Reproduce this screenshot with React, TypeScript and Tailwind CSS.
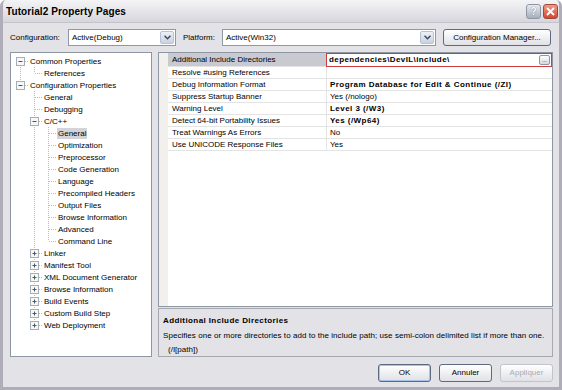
import React from 'react';

type TreeRow = {
  label: string;
  depth: number;
  toggle?: '+' | '-';
  first?: boolean;
  last?: boolean;
  guides: boolean[];
  selected?: boolean;
};

const treeRows: TreeRow[] = [
  { label: 'Common Properties', depth: 0, toggle: '-', first: true, guides: [] },
  { label: 'References', depth: 1, last: true, guides: [true] },
  { label: 'Configuration Properties', depth: 0, toggle: '-', last: true, guides: [] },
  { label: 'General', depth: 1, guides: [false] },
  { label: 'Debugging', depth: 1, guides: [false] },
  { label: 'C/C++', depth: 1, toggle: '-', guides: [false] },
  { label: 'General', depth: 2, guides: [false, true], selected: true },
  { label: 'Optimization', depth: 2, guides: [false, true] },
  { label: 'Preprocessor', depth: 2, guides: [false, true] },
  { label: 'Code Generation', depth: 2, guides: [false, true] },
  { label: 'Language', depth: 2, guides: [false, true] },
  { label: 'Precompiled Headers', depth: 2, guides: [false, true] },
  { label: 'Output Files', depth: 2, guides: [false, true] },
  { label: 'Browse Information', depth: 2, guides: [false, true] },
  { label: 'Advanced', depth: 2, guides: [false, true] },
  { label: 'Command Line', depth: 2, last: true, guides: [false, true] },
  { label: 'Linker', depth: 1, toggle: '+', guides: [false] },
  { label: 'Manifest Tool', depth: 1, toggle: '+', guides: [false] },
  { label: 'XML Document Generator', depth: 1, toggle: '+', guides: [false] },
  { label: 'Browse Information', depth: 1, toggle: '+', guides: [false] },
  { label: 'Build Events', depth: 1, toggle: '+', guides: [false] },
  { label: 'Custom Build Step', depth: 1, toggle: '+', guides: [false] },
  { label: 'Web Deployment', depth: 1, toggle: '+', last: true, guides: [false] },
];

const props: { name: string; value: string; bold?: boolean }[] = [
  { name: 'Additional Include Directories', value: 'dependencies\\DevIL\\include\\', bold: true },
  { name: 'Resolve #using References', value: '' },
  { name: 'Debug Information Format', value: 'Program Database for Edit & Continue (/ZI)', bold: true },
  { name: 'Suppress Startup Banner', value: 'Yes (/nologo)' },
  { name: 'Warning Level', value: 'Level 3 (/W3)', bold: true },
  { name: 'Detect 64-bit Portability Issues', value: 'Yes (/Wp64)', bold: true },
  { name: 'Treat Warnings As Errors', value: 'No' },
  { name: 'Use UNICODE Response Files', value: 'Yes' },
];

const dot = '#bcbcbc';

// guide line for an ancestor level
function Guide({ on }: { on: boolean }) {
  return (
    <svg width="14" height="12" className="shrink-0">
      {on && <line x1="6.5" y1="0" x2="6.5" y2="12" stroke={dot} strokeDasharray="1 1" />}
    </svg>
  );
}

function Node({ row }: { row: TreeRow }) {
  return (
    <svg width="14" height="12" className="shrink-0">
      {!row.first && <line x1="6.5" y1="0" x2="6.5" y2="6" stroke={dot} strokeDasharray="1 1" />}
      {!row.last && <line x1="6.5" y1="6" x2="6.5" y2="12" stroke={dot} strokeDasharray="1 1" />}
      <line x1="7" y1="6.5" x2="14" y2="6.5" stroke={dot} strokeDasharray="1 1" />
      {row.toggle && (
        <>
          <rect x="2.5" y="2.5" width="8" height="8" fill="#f7f7f5" stroke="#a4aebb" />
          <line x1="4.5" y1="6.5" x2="8.5" y2="6.5" stroke="#4a5566" />
          {row.toggle === '+' && <line x1="6.5" y1="4.5" x2="6.5" y2="8.5" stroke="#4a5566" />}
        </>
      )}
    </svg>
  );
}

function Select({ value, className }: { value: string; className: string }) {
  return (
    <div className={`flex h-[17px] items-center border border-[#8f98a8] bg-white ${className}`}>
      <span className="flex-1 pl-[3px] leading-none">{value}</span>
      <div className="m-[1px] flex h-[13px] w-[14px] items-center justify-center rounded-[2px] border border-[#b7c2d4] bg-gradient-to-b from-[#eef1f6] to-[#c9d2e0]">
        <svg width="7" height="5" viewBox="0 0 7 5">
          <path d="M0.5 0.8 L3.5 3.8 L6.5 0.8" fill="none" stroke="#3c4a60" strokeWidth="1.5" />
        </svg>
      </div>
    </div>
  );
}

function Button({ label, className = '', disabled = false, primary = false }: { label: string; className?: string; disabled?: boolean; primary?: boolean }) {
  return (
    <div
      className={`flex items-center justify-center rounded-[3px] border ${
        disabled ? 'border-[#c2c4cb] text-[#a8abb2]' : 'border-[#5d6a82] text-black'
      } ${primary ? 'shadow-[inset_0_0_0_1px_#a9c2e8]' : ''} bg-gradient-to-b from-[#ffffff] to-[#e0e1e6] ${className}`}
    >
      {label}
    </div>
  );
}

export default function App() {
  return (
    <div className="flex h-[390px] w-[562px] flex-col overflow-hidden rounded-t-[6px] border-x-[3px] border-b-[3px] border-[#aeadb8] bg-[#e3e2e7] font-['Liberation_Sans',sans-serif] text-[8px] text-black">
      {/* title bar */}
      <div className="flex h-[23px] shrink-0 items-center justify-between border-b border-[#c3c3cb] bg-gradient-to-b from-[#f4f4f6] via-[#e6e6ea] to-[#d5d5dc] pl-[3px] pr-[1px]">
        <span className="text-[10px] font-bold tracking-[0.1px]">Tutorial2 Property Pages</span>
        <div className="flex gap-[2px]">
          <div className="flex h-[15px] w-[15px] items-center justify-center rounded-[3px] border border-[#8e95a3] bg-gradient-to-b from-[#e8ebf1] to-[#a7afbd] text-[10px] font-bold text-white [text-shadow:0_0_1px_#4d5566]">
            ?
          </div>
          <div className="flex h-[15px] w-[15px] items-center justify-center rounded-[3px] border border-[#9c4a3c] bg-gradient-to-b from-[#f19a86] to-[#d2462c]">
            <svg width="9" height="9" viewBox="0 0 9 9">
              <path d="M1 1 L8 8 M8 1 L1 8" stroke="white" strokeWidth="1.8" />
            </svg>
          </div>
        </div>
      </div>

      <div className="flex flex-1 flex-col pl-[7px] pr-[6px]">
        {/* configuration row */}
        <div className="mt-[6px] flex h-[17px] items-center">
          <span className="w-[58px]">Configuration:</span>
          <Select value="Active(Debug)" className="w-[108px]" />
          <span className="ml-[7px] w-[39px]">Platform:</span>
          <Select value="Active(Win32)" className="w-[214px]" />
          <Button label="Configuration Manager..." className="ml-[7px] h-[17px] w-[108px]" />
        </div>

        {/* main area */}
        <div className="mt-[6px] flex h-[305px] gap-[6px]">
          {/* tree */}
          <div className="w-[142px] border border-[#8e96a4] bg-white pl-[3px] pt-[2px]">
            {treeRows.map((row, i) => (
              <div key={i} className="flex h-[12px] items-center">
                {row.guides.map((g, j) => (
                  <Guide key={j} on={g} />
                ))}
                <Node row={row} />
                <span
                  className={`ml-[1px] whitespace-nowrap px-[1px] leading-[11px] ${row.selected ? 'bg-[#d4d4d8]' : ''}`}
                >
                  {row.label}
                </span>
              </div>
            ))}
          </div>

          {/* right side */}
          <div className="flex w-[395px] flex-col gap-[1px]">
            <div className="flex h-[255px] border border-[#8e96a4] bg-white">
              <div className="w-[9px] bg-[#f1f0ec]" />
              <div className="flex flex-1 flex-col">
                {props.map((p, i) => (
                  <div key={i} className={`flex ${i === 0 ? 'h-[14px]' : 'h-[12px]'}`}>
                    <div
                      className={`flex w-[158px] items-center border-b border-[#e4e4e4] pl-[4px] ${
                        i === 0 ? 'bg-[#c9c9d1]' : ''
                      }`}
                    >
                      {p.name}
                    </div>
                    {i === 0 ? (
                      <div className="flex flex-1 items-center border-[1.5px] border-[#cf3c3c] pl-[2px] pr-[1px]">
                        <span className="flex-1 font-bold tracking-[0.4px]">{p.value}</span>
                        <div className="flex h-[10px] w-[11px] items-end justify-center rounded-[2px] border border-[#8e96a4] bg-gradient-to-b from-white to-[#d6d9e0] pb-[1px] text-[6px] leading-none">
                          ...
                        </div>
                      </div>
                    ) : (
                      <div
                        className={`flex flex-1 items-center border-b border-l border-[#e4e4e4] pl-[3px] ${
                          p.bold ? 'font-bold tracking-[0.45px]' : ''
                        }`}
                      >
                        {p.value}
                      </div>
                    )}
                  </div>
                ))}
              </div>
            </div>
            <div className="flex h-[49px] flex-col border border-[#a6a8b0] px-[4px] pt-[6px]">
              <span className="font-bold tracking-[0.4px]">Additional Include Directories</span>
              <span className="mt-[3px] tracking-[0.05px]">
                Specifies one or more directories to add to the include path; use semi-colon delimited list if more than one.
              </span>
              <span className="ml-[5px] mt-[2px]">(/I[path])</span>
            </div>
          </div>
        </div>

        {/* buttons */}
        <div className="mt-[7px] flex h-[18px] justify-end gap-[8px]">
          <Button label="OK" primary className="w-[53px]" />
          <Button label="Annuler" className="w-[53px]" />
          <Button label="Appliquer" disabled className="w-[53px]" />
        </div>
      </div>
    </div>
  );
}
